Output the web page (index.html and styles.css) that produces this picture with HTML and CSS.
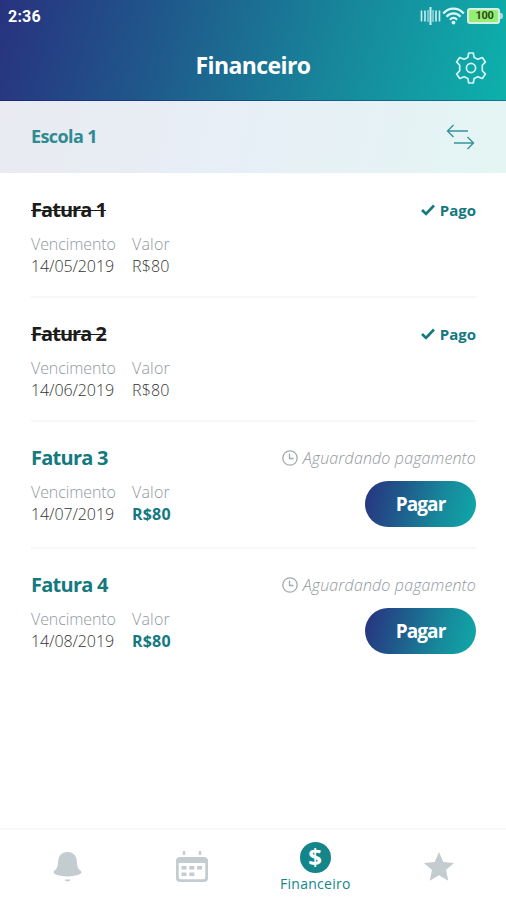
FILE: index.html
```html
<!DOCTYPE html>
<html lang="pt-BR">
<head>
  <meta charset="UTF-8">
  <meta name="viewport" content="width=device-width, initial-scale=1.0">
  <title>Financeiro</title>
  <link rel="stylesheet" href="styles.css">
</head>
<body>

  <header>
    <div class="status-bar">
      <span class="clock">2:36</span>
      <div class="status-icons">
        <svg class="signal" width="21" height="18" viewBox="0 0 21 18" fill="none" stroke="#c9f1f2">
          <path d="M1.500 3.500v11M5 3.500v11M16 3.500v11M19.500 3.500v11" stroke-width="1.600"/>
          <path d="M8 3v12M13 3v12" stroke-width="1.400" opacity=".75"/>
          <path d="M10.500 0v18" stroke-width="2"/>
        </svg>
        <svg class="wifi" width="23" height="18" viewBox="0 0 23 18" fill="none" stroke="#dcf7f7" stroke-width="2.300">
          <path d="M1.200 6.400C7-.1 16-.1 21.800 6.400M4.500 9.700c4-4.400 10-4.400 14 0M7.900 12.700c2.200-2.200 5-2.200 7.200 0"/>
          <circle cx="11.500" cy="15.600" r="1.900" fill="#dcf7f7" stroke="none"/>
        </svg>
        <div class="battery">100</div>
      </div>
    </div>
    <div class="title-bar">
      <h1>Financeiro</h1>
      <svg class="gear" width="32" height="32" viewBox="0 0 32 32" fill="none" stroke="#d5f4f3" stroke-width="1.700" stroke-linejoin="round">
        <path d="M13.700 1h4.600l.8 4.400 3.800 1.900 4.400-1.800 3.100 4.400-3.100 3.400v5.400l3.100 3.400-3.100 4.400-4.400-1.800-3.800 1.900-.8 4.400h-4.600l-.8-4.400-3.800-1.900-4.400 1.800-3.100-4.400 3.100-3.400v-5.400L1.600 9.900l3.100-4.400 4.400 1.800 3.800-1.900z"/>
        <circle cx="16" cy="16" r="4.600"/>
      </svg>
    </div>
  </header>

  <div class="school-bar">
    <h2>Escola 1</h2>
    <svg width="29" height="26" viewBox="0 0 29 26" fill="none" stroke="#37939a" stroke-width="1.400">
      <path d="M22 7H1.500M7.500 1l-6 6 6 6M8 19h19.500M21.500 13l6 6-6 6"/>
    </svg>
  </div>

  <main>
    <section class="invoice paid">
      <div class="info">
        <h3>Fatura 1</h3>
        <div class="fields">
          <div class="due"><span>Vencimento</span><p>14/05/2019</p></div>
          <div class="value"><span>Valor</span><p>R$80</p></div>
        </div>
      </div>
      <div class="side">
        <div class="state">
          <svg width="14" height="12" viewBox="0 0 14 12" fill="none" stroke="#14797f" stroke-width="2.600"><path d="M1 6l4 4 8-8.500"/></svg>
          <b>Pago</b>
        </div>
      </div>
    </section>

    <section class="invoice paid">
      <div class="info">
        <h3>Fatura 2</h3>
        <div class="fields">
          <div class="due"><span>Vencimento</span><p>14/06/2019</p></div>
          <div class="value"><span>Valor</span><p>R$80</p></div>
        </div>
      </div>
      <div class="side">
        <div class="state">
          <svg width="14" height="12" viewBox="0 0 14 12" fill="none" stroke="#14797f" stroke-width="2.600"><path d="M1 6l4 4 8-8.500"/></svg>
          <b>Pago</b>
        </div>
      </div>
    </section>

    <section class="invoice">
      <div class="info">
        <h3>Fatura 3</h3>
        <div class="fields">
          <div class="due"><span>Vencimento</span><p>14/07/2019</p></div>
          <div class="value"><span>Valor</span><p>R$80</p></div>
        </div>
      </div>
      <div class="side">
        <div class="state">
          <svg width="16" height="16" viewBox="0 0 16 16" fill="none" stroke="#a3aaad" stroke-width="1.300"><circle cx="8" cy="8" r="7.200"/><path d="M7.500 3.500V8.500H11.500"/></svg>
          <i>Aguardando pagamento</i>
        </div>
        <button>Pagar</button>
      </div>
    </section>

    <section class="invoice">
      <div class="info">
        <h3>Fatura 4</h3>
        <div class="fields">
          <div class="due"><span>Vencimento</span><p>14/08/2019</p></div>
          <div class="value"><span>Valor</span><p>R$80</p></div>
        </div>
      </div>
      <div class="side">
        <div class="state">
          <svg width="16" height="16" viewBox="0 0 16 16" fill="none" stroke="#a3aaad" stroke-width="1.300"><circle cx="8" cy="8" r="7.200"/><path d="M7.500 3.500V8.500H11.500"/></svg>
          <i>Aguardando pagamento</i>
        </div>
        <button>Pagar</button>
      </div>
    </section>
  </main>

  <nav>
    <a class="tab">
      <svg width="29" height="32" viewBox="0 0 30 32" fill="#c3cccf">
        <path d="M15 .5C8.500.500 5.500 5 5.300 10.500 5.100 17 3.500 18 1.300 20c-1.300 1.400-.8 2.700 1 3.600 7 2.900 18.400 2.900 25.400 0 1.800-.9 2.300-2.200 1-3.600-2.200-2-3.800-3-4-9.500C24.500 5 21.500.500 15 .5z"/>
        <path d="M12 29h6.200c-.6 2.600-5.600 2.600-6.200 0z"/>
      </svg>
    </a>
    <a class="tab">
      <svg width="32" height="31" viewBox="0 0 32 31" fill="#c3cccf">
        <path d="M6.800 0h2.400v4H6.800zM22.800 0h2.400v4h-2.400z"/>
        <path fill-rule="evenodd" d="M4 6h24q4 0 4 4v17q0 4-4 4H4q-4 0-4-4V10q0-4 4-4zM2.700 12v14q0 2.300 2.300 2.300h22q2.300 0 2.300-2.300V12z"/>
        <path d="M5.500 15h5v3.400h-5zM13.300 15h5v3.400h-5zM21.100 15h5v3.400h-5zM5.500 21.500h5v3.400h-5zM13.300 21.500h5v3.400h-5z"/>
      </svg>
    </a>
    <a class="tab active">
      <div class="coin">$</div>
      <span>Financeiro</span>
    </a>
    <a class="tab">
      <svg width="30" height="29" viewBox="0 0 30 29" fill="#c3cccf">
        <path d="M15 0l4.300 9.900L30 10.900l-8 7.200L24.300 28.700 15 23.200 5.700 28.700 8 18.100 0 10.900l10.700-1z"/>
      </svg>
    </a>
  </nav>

</body>
</html>
```

FILE: styles.css
```css
* {
  margin: 0;
  padding: 0;
  box-sizing: border-box;
}

body {
  font-family: "Open Sans", "Noto Sans", sans-serif;
  background: #fff;
  color: #222;
  height: 100vh;
  display: flex;
  flex-direction: column;
  overflow: hidden;
}

/* Header */
header {
  height: 101px;
  background: linear-gradient(105deg, #28327f 0%, #1f5a8c 33%, #17889b 67%, #0db0ac 100%);
  border-bottom: 1px solid rgba(10, 20, 120, 0.35);
  color: #fff;
}

.status-bar {
  height: 32px;
  padding: 0 4px 0 8px;
  display: flex;
  align-items: center;
  justify-content: space-between;
}

.clock {
  font-family: Roboto, sans-serif;
  font-size: 16px;
  font-weight: 700;
  letter-spacing: 0.2px;
}

.status-icons {
  display: flex;
  align-items: center;
  gap: 2px;
}

.signal {
  margin-right: -1px;
}

.battery {
  width: 33px;
  height: 16px;
  margin-right: 2px;
  padding-left: 2px;
  border: 2px solid #d8eee6;
  border-radius: 3px;
  background: #94ee72;
  color: #2a4a20;
  font: 700 11px/12px Roboto, sans-serif;
  letter-spacing: -0.3px;
  text-align: center;
  position: relative;
}

.battery::after {
  content: "";
  position: absolute;
  right: -5px;
  top: 3px;
  width: 3px;
  height: 6px;
  border-radius: 0 2px 2px 0;
  background: #a9dcd6;
}

.title-bar {
  height: 68px;
  padding: 0 19px 0 51px;
  display: flex;
  align-items: center;
}

h1 {
  flex: 1;
  padding-bottom: 2px;
  font-size: 23px;
  font-weight: 700;
  text-align: center;
  letter-spacing: -0.6px;
}

.gear {
  margin-top: 3px;
}

/* School */
.school-bar {
  height: 72px;
  padding: 0 31px;
  display: flex;
  align-items: center;
  justify-content: space-between;
  background: linear-gradient(105deg, #e9eaf2, #e7eff6 50%, #e4f5f3);
}

h2 {
  font-size: 18px;
  font-weight: 700;
  letter-spacing: -0.6px;
  color: #2f8b90;
  padding-bottom: 3px;
}

/* Invoices */
main {
  flex: 1;
  padding: 1px 30px 0 31px;
}

.invoice {
  display: flex;
  justify-content: space-between;
  padding: 23px 0 19px;
  border-bottom: 2px solid #f6f7f7;
}

.invoice:last-child {
  border-bottom: none;
}

h3 {
  font-size: 20px;
  line-height: 26px;
  font-weight: 700;
  letter-spacing: -0.75px;
  color: #14797f;
  margin-bottom: 10px;
  width: max-content;
}

.paid h3 {
  color: #1c1c1c;
  letter-spacing: -0.95px;
  text-decoration: line-through 1px;
}

.fields {
  display: flex;
  font-weight: 300;
  font-size: 16px;
  line-height: 22px;
  letter-spacing: -0.1px;
  white-space: nowrap;
}

.due {
  width: 101px;
}

.fields span {
  color: #8f999d;
}

.fields p {
  color: #333;
}

.value {
  letter-spacing: 0.2px;
}

.invoice:not(.paid) .value p {
  font-weight: 700;
  color: #14797f;
}

.side {
  display: flex;
  flex-direction: column;
  align-items: flex-end;
}

.state {
  height: 26px;
  margin-bottom: 10px;
  display: flex;
  align-items: center;
  gap: 5px;
  font-size: 16px;
  white-space: nowrap;
}

.state b {
  font-size: 15px;
  font-weight: 700;
  color: #14797f;
  padding-bottom: 1px;
}

.state i {
  font-weight: 300;
  letter-spacing: 0.15px;
  color: #8f999d;
}

button {
  width: 111px;
  height: 46px;
  margin-bottom: 1px;
  border: none;
  border-radius: 23px;
  background: linear-gradient(105deg, #28327f 0%, #1f5a8c 33%, #17889b 67%, #0fa9a9 100%);
  color: #fff;
  font: 700 19px "Open Sans", sans-serif;
  letter-spacing: -0.9px;
}

/* Bottom tabs */
nav {
  height: 72px;
  padding: 0 5px 0 6px;
  border-top: 2px solid #f8f9f9;
  display: flex;
}

.tab {
  flex: 1;
  display: flex;
  flex-direction: column;
  align-items: center;
  justify-content: center;
  padding-top: 3px;
}

.active {
  justify-content: flex-start;
  padding-top: 12px;
  color: #14858b;
  font-size: 14px;
  line-height: 22px;
  letter-spacing: 0.3px;
}

.coin {
  width: 31px;
  height: 31px;
  border-radius: 50%;
  background: #14858b;
  color: #fff;
  font-size: 24px;
  font-weight: 700;
  line-height: 30px;
  text-align: center;
}
```
